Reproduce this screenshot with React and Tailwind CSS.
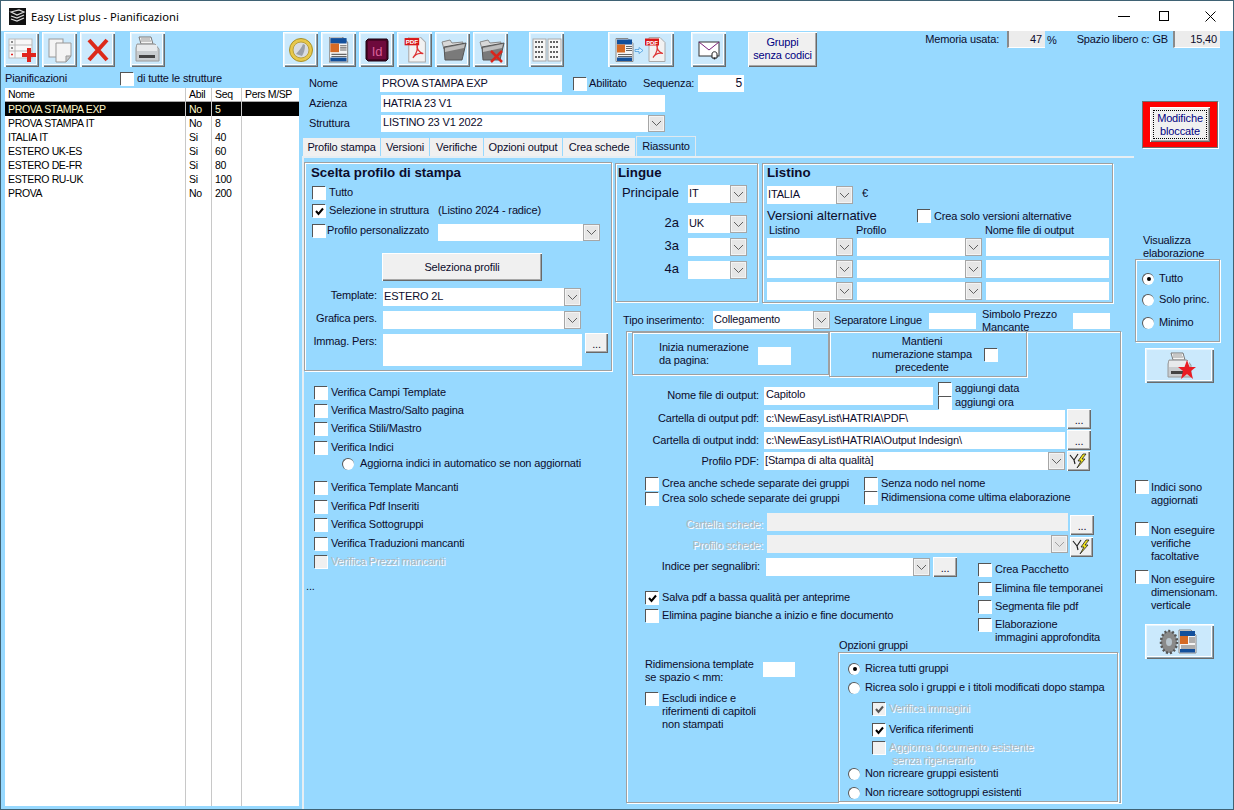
import React from "react";

const raised = "shadow-[inset_1px_1px_0_#fff,inset_-1px_-1px_0_#696969,inset_-2px_-2px_0_#a8a8a8]";
const group = "border border-[#a0a0a0] shadow-[1px_1px_0_#fff,inset_1px_1px_0_#fff]";
const disabledText = "text-[#aeb8c0] [text-shadow:1px_1px_0_#fff]";

const Check = ({ checked, disabled, className = "" }) => (
  <span
    className={`shrink-0 inline-flex w-[13px] h-[13px] items-center justify-center border-t border-l border-[#555] shadow-[1px_1px_0_#fff] ${disabled ? "bg-[#f0f0f0]" : "bg-white"} ${className}`}
  >
    {checked && (
      <svg width="11" height="11" viewBox="0 0 11 11">
        <path d="M2 5 L4.5 8 L9 2.5" fill="none" stroke={disabled ? "#555" : "#000"} strokeWidth="2" />
      </svg>
    )}
  </span>
);

const Radio = ({ checked, className = "" }) => (
  <span
    className={`shrink-0 inline-flex w-[12px] h-[12px] rounded-full bg-white items-center justify-center border-t border-l border-[#555] ${className}`}
  >
    {checked && <span className="w-[4px] h-[4px] rounded-full bg-black" />}
  </span>
);

const Input = ({ value, className = "", right, disabled }) => (
  <div
    className={`flex items-center px-[2px] overflow-hidden whitespace-nowrap ${disabled ? "bg-[#f0f0f0]" : "bg-white"} ${right ? "justify-end" : ""} ${className}`}
  >
    {value}
  </div>
);

const Arrow = ({ disabled }) => (
  <div className="w-[17px] shrink-0 self-stretch flex items-center justify-center bg-[#e6e6e6] border border-[#a6a6a6] shadow-[inset_0_0_0_1px_#f4f4f4]">
    <svg width="11" height="7" viewBox="0 0 11 7">
      <path d="M1 1 L5.5 5.5 L10 1" fill="none" stroke={disabled ? "#a0a0a0" : "#606060"} strokeWidth="1" />
    </svg>
  </div>
);

const Select = ({ value, className = "", disabled }) => (
  <div className={`flex ${disabled ? "bg-[#f0f0f0]" : "bg-white"} ${className}`}>
    <div className="flex-1 px-[1px] pb-[2px] flex items-center overflow-hidden whitespace-nowrap">{value}</div>
    <Arrow disabled={disabled} />
  </div>
);

const Dots = ({ className = "" }) => (
  <div className={`bg-[#f0f0f0] flex items-center justify-center pt-[3px] ${raised} ${className}`}>...</div>
);

const Bolt = ({ className = "" }) => (
  <div className={`bg-[#f0f0f0] flex items-center justify-center ${raised} ${className}`}>
    <svg width="20" height="16" viewBox="0 0 20 16">
      <path d="M1 2 L5 7 M9 1 L5 7 L6 11" fill="none" stroke="#222" strokeWidth="1.2" />
      <path d="M14 1 L9 8 L12 8 L8 15 L16 6 L13 6 L17 1 Z" fill="#f5e81e" stroke="#222" strokeWidth="0.8" />
    </svg>
  </div>
);

const IconBtn = ({ children, className = "w-[35px]" }) => (
  <div
    className={`h-[35px] shrink-0 bg-[#cbe9fc] flex items-center justify-center shadow-[inset_1px_1px_0_#fff,inset_2px_2px_0_#e6f6ff,inset_-1px_-1px_0_#6b6b6b,inset_-2px_-2px_0_#8fa4b0,inset_-3px_-3px_0_#fff] ${className}`}
  >
    {children}
  </div>
);

const Sheet = ({ x = 0, y = 0 }) => (
  <g transform={`translate(${x} ${y})`}>
    <path d="M0 0 H12 L17 5 V23 H0 Z" fill="#f4f4f4" stroke="#888" />
    <rect x="1" y="1" width="15" height="5" fill="#12509c" />
    <rect x="1" y="6" width="8" height="8" fill="#d56a24" />
    <path d="M10 8 H16 M10 10 H16 M10 12 H16 M2 16 H16 M2 18 H16" stroke="#666" />
    <rect x="1" y="19" width="15" height="3.5" fill="#12509c" />
  </g>
);

const PdfDoc = ({ x = 0, y = 0 }) => (
  <g transform={`translate(${x} ${y})`}>
    <path d="M4 0 H15 L20 5 V24 H4 Z" fill="#f2f2f2" stroke="#aaa" />
    <path d="M8 20 C12 16 13 10 12 7 C11 11 14 15 18 16 C14 15 10 17 8 20 Z" fill="none" stroke="#d33" strokeWidth="1.2" />
    <rect x="0" y="1" width="14" height="7" fill="#d81818" />
    <text x="7" y="7" textAnchor="middle" fontSize="6" fontWeight="700" fill="#fff" fontFamily="Liberation Sans">PDF</text>
  </g>
);

const Folder = ({ cross }) => (
  <svg width="28" height="26" viewBox="0 0 28 26">
    <path d="M3 5 L11 3 L13 6 L24 5 L23 9 L5 12 Z" fill="#d8d8d8" stroke="#888" />
    <path d="M5 10 L27 6 L23 23 L6 23 Z" fill="#7a7a7a" stroke="#555" />
    <path d="M6 11 L26 7 L25 11 L6 15 Z" fill="#bdbdbd" />
    {cross && <path d="M14 14 L25 25 M25 14 L14 25" stroke="#d9261c" strokeWidth="2.5" />}
  </svg>
);

const Printer = ({ star }) => (
  <svg width="32" height="28" viewBox="0 0 32 28">
    <path d="M7 1 H19 L21 8 H9 Z" fill="#f4f4f4" stroke="#777" />
    <path d="M9 3 H18 M9 5 H19" stroke="#999" />
    <path d="M5 8 H23 L27 13 V25 H4 V12 Z" fill="#c9cdd0" stroke="#9a9a9a" />
    <rect x="5" y="9" width="20" height="6" fill="#e8eaec" />
    <rect x="7" y="19" width="16" height="3" fill="#444" />
    {star && <path d="M23 8 L25.5 15 H32 L27 19 L29 27 L23 22 L17 27 L19 19 L14 15 H20.5 Z" fill="#e81c24" />}
  </svg>
);

const GridIcon = () => (
  <svg width="30" height="24" viewBox="0 0 30 24">
    <rect x="1" y="1" width="13" height="22" fill="#f6f6f6" stroke="#aaa" />
    <rect x="16" y="1" width="13" height="22" fill="#f6f6f6" stroke="#aaa" />
    <path d="M3 4 H12 M3 9 H12 M3 14 H12 M3 19 H12 M18 4 H27 M18 9 H27 M18 14 H27 M18 19 H27" stroke="#333" strokeWidth="1.5" strokeDasharray="2 1" />
  </svg>
);

const toolbarLeft = [
  <svg key="n" width="30" height="26" viewBox="0 0 30 26">
    <rect x="2" y="2" width="23" height="19" fill="#f8f8f8" stroke="#bbb" />
    <path d="M8 2 V21 M2 8 H25 M2 14 H25" stroke="#bbb" />
    <path d="M4 5 H6 M4 11 H6" stroke="#222" />
    <path d="M4 17.5 H6 M5 16.5 V18.5" stroke="#d22" />
    <path d="M20 11 H24 V16 H29 V20 H24 V25 H20 V20 H15 V16 H20 Z" fill="#e0241c" />
  </svg>,
  <svg key="c" width="26" height="26" viewBox="0 0 26 26">
    <rect x="2" y="2" width="14" height="18" fill="#f4f4f4" stroke="#999" />
    <path d="M9 6 H24 V19 L19 25 H9 Z" fill="#f4f4f4" stroke="#999" />
    <path d="M19 25 V19 H24 Z" fill="#ccc" stroke="#999" />
  </svg>,
  <svg key="x" width="24" height="24" viewBox="0 0 24 24">
    <path d="M3 2 L21 22 M21 2 L3 22" stroke="#dc2a1a" strokeWidth="4" />
  </svg>,
];

const rows = [
  ["PROVA STAMPA EXP", "No", "5"],
  ["PROVA STAMPA IT", "No", "8"],
  ["ITALIA IT", "Si", "40"],
  ["ESTERO UK-ES", "Si", "60"],
  ["ESTERO DE-FR", "Si", "80"],
  ["ESTERO RU-UK", "Si", "100"],
  ["PROVA", "No", "200"],
];

const columns = [
  { title: "Nome", width: "w-[181px]", cell: (r) => r[0] },
  { title: "Abil", width: "w-[26px]", cell: (r) => r[1] },
  { title: "Seq", width: "w-[30px]", cell: (r) => r[2] },
  { title: "Pers M/SP", width: "flex-1", cell: () => "" },
];

const tabs = [
  ["Profilo stampa", "w-[77px]"],
  ["Versioni", "w-[48px]"],
  ["Verifiche", "w-[53px]"],
  ["Opzioni output", "w-[78px]"],
  ["Crea schede", "w-[72px]"],
];

const verifiche = [
  ["Verifica Campi Template", "mt-[15px]"],
  ["Verifica Mastro/Salto pagina", "mt-[5px]"],
  ["Verifica Stili/Mastro", "mt-[5px]"],
  ["Verifica Indici", "mt-[6px]"],
];
const verifiche2 = [
  ["Verifica Template Mancanti", "mt-[11px]"],
  ["Verifica Pdf Inseriti", "mt-[6px]"],
  ["Verifica Sottogruppi", "mt-[5px]"],
  ["Verifica Traduzioni mancanti", "mt-[6px]"],
];

const CheckRow = ({ label, className = "", checked }) => (
  <div className={`flex items-center h-[13px] whitespace-nowrap ${className}`}>
    <Check checked={checked} />
    <span className="ml-[4px]">{label}</span>
  </div>
);

const LangRow = ({ label, value, className = "" }) => (
  <div className={`flex h-[18px] ${className}`}>
    <div className="w-[64px] pr-[1px] text-right text-[13px] leading-[16px] tracking-normal">{label}</div>
    <Select value={value} className="ml-[8px] w-[59px] h-[18px]" />
  </div>
);

const AltRow = ({ className = "" }) => (
  <div className={`flex h-[18px] ${className}`}>
    <Select className="w-[86px]" />
    <Select className="ml-[4px] w-[125px]" />
    <Input className="ml-[4px] w-[123px]" />
  </div>
);

export default function App() {
  return (
    <div className="w-[1234px] h-[810px] overflow-hidden flex flex-col bg-[#97d9ff] text-[#0c0c2c] text-[11px] tracking-[-0.15px] leading-[13px] border-x border-b border-[#3f6274] font-['Liberation_Sans',Arial,sans-serif]">
      {/* title bar */}
      <div className="h-[31px] shrink-0 bg-white border-t border-[#3f6274] flex items-center text-black">
        <svg className="ml-[8px]" width="17" height="17" viewBox="0 0 17 17">
          <rect width="17" height="17" fill="#111" />
          <path d="M2 4 L10 2 L15 4 L8 7 Z M2 8 L8 10 L15 7 M2 11 L8 13 L15 10" fill="none" stroke="#ddd" strokeWidth="1.2" />
        </svg>
        <span className="ml-[5px] text-[11.2px] tracking-normal font-['Noto_Sans',sans-serif]">Easy List plus - Pianificazioni</span>
        <div className="ml-auto flex items-center mr-[17px]">
          <div className="w-[12px] h-[1px] bg-black mr-[29px]" />
          <div className="w-[10px] h-[10px] border border-black mr-[36px]" />
          <svg width="11" height="11" viewBox="0 0 11 11">
            <path d="M0.5 0.5 L10.5 10.5 M10.5 0.5 L0.5 10.5" stroke="#000" />
          </svg>
        </div>
      </div>

      {/* toolbar */}
      <div className="h-[37px] shrink-0 flex items-start pl-[3px] pt-[1px]">
        <div className="flex gap-[3px]">
          {toolbarLeft.map((icon, i) => (
            <IconBtn key={i}>{icon}</IconBtn>
          ))}
        </div>
        <IconBtn className="w-[35px] ml-[15px]"><Printer /></IconBtn>
        <div className="flex gap-[3px] ml-[118px]">
          <IconBtn>
            <svg width="26" height="26" viewBox="0 0 26 26">
              <circle cx="13" cy="13" r="11.5" fill="#e8c84a" stroke="#a8902a" />
              <circle cx="13" cy="13" r="8" fill="#d8dce2" stroke="#b8a040" />
              <path d="M8 17 C11 14 14 10 15 7 L17 8 C17 12 16 16 14 19 Z" fill="#9aa0aa" />
            </svg>
          </IconBtn>
          <IconBtn>
            <svg width="20" height="26" viewBox="0 0 18 24"><Sheet /></svg>
          </IconBtn>
          <IconBtn>
            <svg width="24" height="24" viewBox="0 0 24 24">
              <path d="M1 3 L3 1 H22 L23 3 V21 L21 23 H3 L1 21 Z" fill="#4a0525" stroke="#1a0210" />
              <rect x="3" y="3" width="18" height="18" rx="1" fill="#6e0a3c" />
              <text x="12" y="18" textAnchor="middle" fontSize="13" fill="#d9609a" fontFamily="Liberation Sans">Id</text>
            </svg>
          </IconBtn>
          <IconBtn>
            <svg width="22" height="26" viewBox="0 0 20 25"><PdfDoc /></svg>
          </IconBtn>
          <IconBtn><Folder /></IconBtn>
          <IconBtn><Folder cross /></IconBtn>
        </div>
        <IconBtn className="w-[35px] ml-[21px]"><GridIcon /></IconBtn>
        <IconBtn className="w-[66px] ml-[44px]">
          <svg width="52" height="26" viewBox="0 0 52 25">
            <Sheet x="1" y="1" />
            <path d="M20 12 H24 V10 L28 13 L24 16 V14 H20 Z" fill="#d8f2ff" stroke="#3a90d8" strokeWidth="0.7" />
            <PdfDoc x="30" />
          </svg>
        </IconBtn>
        <IconBtn className="w-[35px] ml-[17px]">
          <svg width="22" height="20" viewBox="0 0 22 20">
            <rect x="1" y="2" width="20" height="14" fill="#fff" stroke="#333" />
            <path d="M1 2 L11 10 L21 2" fill="none" stroke="#7a1f7a" />
            <path d="M14 18 V14 C14 11 19 11 19 14 V18 Z" fill="#fff" stroke="#222" />
            <circle cx="16.5" cy="18.5" r="1" fill="#222" />
          </svg>
        </IconBtn>
        <div className={`w-[69px] h-[35px] ml-[22px] bg-[#f0f0f0] text-[#000080] text-center flex items-center justify-center pb-[1px] ${raised}`}>
          Gruppi<br />senza codici
        </div>
        <div className="ml-auto mr-[13px] -mt-[1px] flex items-start">
          <span className="mt-[2px]">Memoria usata:</span>
          <div className="ml-[8px] w-[38px] h-[17px] bg-[#ececec] border-l-2 border-[#8a8a8a] border-b border-b-white flex items-center justify-end pr-[3px]">47</div>
          <span className="ml-[2px] mt-[3px] mr-[20px]">%</span>
          <span className="mt-[2px]">Spazio libero c: GB</span>
          <div className="ml-[5px] w-[47px] h-[17px] bg-[#ececec] border-l-2 border-[#8a8a8a] border-b border-b-white flex items-center justify-end pr-[3px]">15,40</div>
        </div>
      </div>

      <div className="flex-1 flex min-h-0">
        {/* plan list */}
        <div className="w-[301px] shrink-0 pl-[4px] pr-[3px] flex flex-col">
          <div className="flex items-center h-[13px] mt-[4px]">
            <span className="w-[115px]">Pianificazioni</span>
            <Check />
            <span className="ml-[4px]">di tutte le strutture</span>
          </div>
          <div className="mt-[3px] h-[718px] bg-white flex text-black text-[10.5px] tracking-[-0.35px]">
            {columns.map((col, c) => (
              <div key={col.title} className={`${col.width} ${c < 3 ? "border-r border-[#c8c8c8]" : ""} flex flex-col`}>
                <div className="h-[14px] pl-[3px] flex items-center whitespace-nowrap border-b border-[#a8a8a8] shrink-0">{col.title}</div>
                {rows.map((r, i) => (
                  <div
                    key={r[0]}
                    className={`h-[14px] pl-[3px] flex items-center whitespace-nowrap shrink-0 ${i === 0 ? "bg-black text-[#fff7c8]" : ""}`}
                  >
                    {col.cell(r)}
                  </div>
                ))}
              </div>
            ))}
          </div>
        </div>

        <div className="w-[832px] shrink-0 flex flex-col">
          {/* header fields */}
          <div className="flex items-center h-[17px] mt-[7px]">
            <span className="w-[78px] pl-[7px]">Nome</span>
            <Input value="PROVA STAMPA EXP" className="w-[182px] h-[17px]" />
            <Check className="ml-[11px]" />
            <span className="ml-[3px] w-[54px]">Abilitato</span>
            <span className="w-[50px]">Sequenza:</span>
            <Input value="5" right className="ml-[5px] w-[46px] h-[17px] text-[12px]" />
          </div>
          <div className="flex items-center h-[17px] mt-[3px]">
            <span className="w-[79px] pl-[7px]">Azienza</span>
            <Input value="HATRIA 23 V1" className="w-[284px] h-[17px]" />
          </div>
          <div className="flex items-center h-[17px] mt-[3px]">
            <span className="w-[79px] pl-[7px]">Struttura</span>
            <Select value="LISTINO 23 V1 2022" className="w-[284px] h-[17px] pl-[1px]" />
          </div>

          {/* tabs */}
          <div className="flex mt-[4px] h-[20px] pl-[1px] gap-[1px] items-end">
            {tabs.map(([t, w]) => (
              <div key={t} className={`${w} h-[18px] bg-[#f0f0f0] flex items-center justify-center whitespace-nowrap`}>{t}</div>
            ))}
            <div className="w-[60px] h-[20px] border-t border-x border-[#dfe9ef] flex items-center justify-center">Riassunto</div>
          </div>
          <div className="h-[2px] bg-[#e6eef3] shrink-0" />

          <div className="flex-1 flex border-l-2 border-[#e6eef3] min-h-0">
            {/* left column */}
            <div className="w-[311px] shrink-0 flex flex-col">
              <div className={`w-[308px] h-[209px] mt-[4px] ${group}`}>
                <div className="pl-[6px] h-[18px] flex items-center font-bold text-[13.3px] tracking-normal">Scelta profilo di stampa</div>
                <CheckRow label="Tutto" className="mt-[5px] ml-[7px]" />
                <div className="flex items-center h-[13px] mt-[5px] ml-[7px] whitespace-nowrap">
                  <Check checked />
                  <span className="ml-[4px] w-[109px]">Selezione in struttura</span>
                  <span>(Listino 2024 - radice)</span>
                </div>
                <div className="flex h-[17px] mt-[7px] ml-[7px] whitespace-nowrap">
                  <Check />
                  <span className="ml-[2px] w-[111px]">Profilo personalizzato</span>
                  <Select className="w-[162px] h-[17px]" />
                </div>
                <div className={`ml-[77px] mt-[12px] w-[160px] h-[28px] bg-[#f0f0f0] flex items-center justify-center ${raised}`}>Seleziona profili</div>
                <div className="flex h-[18px] mt-[7px]">
                  <div className="w-[72px] text-right pt-[1px]">Template:</div>
                  <Select value="ESTERO 2L" className="ml-[6px] w-[198px]" />
                </div>
                <div className="flex h-[18px] mt-[5px]">
                  <div className="w-[72px] text-right pt-[1px]">Grafica pers.</div>
                  <Select className="ml-[6px] w-[198px]" />
                </div>
                <div className="flex mt-[4px]">
                  <div className="w-[72px] text-right pt-[2px]">Immag. Pers:</div>
                  <div className="ml-[6px] mt-[1px] w-[199px] h-[32px] bg-white" />
                  <Dots className="ml-[3px] w-[23px] h-[20px]" />
                </div>
              </div>

              <div className="pl-[10px]">
                {verifiche.map(([t, m]) => (
                  <CheckRow key={t} label={t} className={m} />
                ))}
                <div className="flex items-center h-[13px] mt-[3px] ml-[28px] whitespace-nowrap">
                  <Radio />
                  <span className="ml-[6px]">Aggiorna indici in automatico se non aggiornati</span>
                </div>
                {verifiche2.map(([t, m]) => (
                  <CheckRow key={t} label={t} className={m} />
                ))}
                <div className="flex items-center h-[13px] mt-[5px] whitespace-nowrap">
                  <Check disabled />
                  <span className={`ml-[4px] ${disabledText}`}>Verifica Prezzi mancanti</span>
                </div>
              </div>
              <div className="pl-[2px] mt-[12px]">...</div>
            </div>

            {/* middle column */}
            <div className="flex-1 flex flex-col min-w-0">
              <div className="flex mt-[5px]">
                <div className={`w-[143px] h-[139px] ${group}`}>
                  <div className="pl-[2px] h-[17px] flex items-center font-bold text-[13.3px] tracking-normal">Lingue</div>
                  <LangRow label="Principale" value="IT" className="mt-[4px]" />
                  <LangRow label="2a" value="UK" className="mt-[12px]" />
                  <LangRow label="3a" value="" className="mt-[5px]" />
                  <LangRow label="4a" value="" className="mt-[5px]" />
                </div>
                <div className={`ml-[4px] w-[351px] h-[140px] pl-[4px] ${group}`}>
                  <div className="h-[16px] flex items-center font-bold text-[13.3px] tracking-normal">Listino</div>
                  <div className="flex h-[18px] mt-[6px]">
                    <Select value="ITALIA" className="w-[86px]" />
                    <span className="ml-[9px] pt-[1px]">€</span>
                  </div>
                  <div className="flex items-center h-[16px] mt-[3px] whitespace-nowrap">
                    <span className="text-[13px] w-[150px] tracking-normal">Versioni alternative</span>
                    <Check />
                    <span className="ml-[4px] mt-[2px]">Crea solo versioni alternative</span>
                  </div>
                  <div className="flex h-[13px] mt-[1px] whitespace-nowrap">
                    <span className="ml-[2px] w-[87px]">Listino</span>
                    <span className="w-[129px]">Profilo</span>
                    <span>Nome file di output</span>
                  </div>
                  <AltRow className="mt-[1px]" />
                  <AltRow className="mt-[4px]" />
                  <AltRow className="mt-[4px]" />
                </div>
              </div>

              <div className="flex mt-[8px] h-[20px] whitespace-nowrap">
                <span className="ml-[8px] w-[90px] pt-[3px]">Tipo inserimento:</span>
                <Select value="Collegamento" className="w-[117px] h-[18px]" />
                <span className="ml-[4px] w-[95px] pt-[3px]">Separatore Lingue</span>
                <Input className="w-[47px] h-[16px] mt-[2px]" />
                <span className="ml-[6px] w-[91px] -mt-[3px] leading-[13px]">Simbolo Prezzo<br />Mancante</span>
                <Input className="w-[37px] h-[16px] mt-[2px]" />
              </div>

              {/* output box */}
              <div className={`ml-[11px] w-[495px] h-[472px] ${group}`}>
                <div className="flex ml-[5px]">
                  <div className={`w-[197px] h-[43px] flex items-center ${group}`}>
                    <span className="ml-[26px] w-[99px]">Inizia numerazione<br />da pagina:</span>
                    <Input className="w-[33px] h-[18px] mt-[4px]" />
                  </div>
                  <div className={`w-[198px] h-[46px] flex items-center -mt-[1px] ${group}`}>
                    <span className="ml-[30px] w-[124px] text-center whitespace-nowrap">Mantieni<br />numerazione stampa<br />precedente</span>
                    <Check />
                  </div>
                </div>

                <div className="flex mt-[6px] h-[26px]">
                  <div className="w-[132px] text-right pt-[6px]">Nome file di output:</div>
                  <Input value="Capitolo" className="ml-[5px] w-[169px] h-[18px] mt-[4px] pb-[3px]" />
                  <div className="ml-[5px] -mt-[1px]">
                    <CheckRow label="aggiungi data" />
                    <CheckRow label="aggiungi ora" className="mt-[1px]" />
                  </div>
                </div>
                <div className="flex h-[21px]">
                  <div className="w-[132px] text-right pt-[3px]">Cartella di output pdf:</div>
                  <Input value="c:\NewEasyList\HATRIA\PDF\" className="ml-[5px] w-[301px] h-[17px] mt-[1px]" />
                  <Dots className="ml-[2px] w-[24px] h-[20px]" />
                </div>
                <div className="flex h-[21px]">
                  <div className="w-[132px] text-right pt-[4px]">Cartella di output indd:</div>
                  <Input value="c:\NewEasyList\HATRIA\Output Indesign\" className="ml-[5px] w-[301px] h-[17px] mt-[2px]" />
                  <Dots className="ml-[2px] w-[24px] h-[20px]" />
                </div>
                <div className="flex h-[20px]">
                  <div className="w-[132px] text-right pt-[4px]">Profilo PDF:</div>
                  <Select value="[Stampa di alta qualità]" className="ml-[5px] w-[301px] h-[18px] mt-[1px]" />
                  <Bolt className="ml-[2px] w-[23px] h-[20px]" />
                </div>

                <div className="flex mt-[6px]">
                  <div className="ml-[18px] w-[219px]">
                    <CheckRow label="Crea anche schede separate dei gruppi" />
                    <CheckRow label="Crea solo schede separate dei gruppi" className="mt-[2px]" />
                  </div>
                  <div>
                    <CheckRow label="Senza nodo nel nome" />
                    <CheckRow label="Ridimensiona come ultima elaborazione" className="mt-[1px]" />
                  </div>
                </div>

                <div className="flex mt-[8px] h-[20px]">
                  <div className={`w-[136px] text-right pt-[5px] ${disabledText}`}>Cartella schede:</div>
                  <Input disabled className="ml-[4px] w-[301px] h-[18px]" />
                  <Dots className="ml-[2px] w-[24px] h-[20px] mt-[2px]" />
                </div>
                <div className="flex mt-[2px] h-[21px]">
                  <div className={`w-[136px] text-right pt-[4px] ${disabledText}`}>Profilo schede:</div>
                  <Select disabled className="ml-[4px] w-[301px] h-[18px]" />
                  <Bolt className="ml-[2px] w-[23px] h-[20px] mt-[2px]" />
                </div>

                <div className="flex mt-[1px] h-[20px]">
                  <div className="w-[133px] text-right pt-[3px]">Indice per segnalibri:</div>
                  <Select className="ml-[6px] w-[164px] h-[18px] mt-[1px]" />
                  <Dots className="ml-[3px] w-[24px] h-[20px]" />
                  <div className="ml-[21px] mt-[6px]">
                    <CheckRow label="Crea Pacchetto" />
                  </div>
                </div>

                <div className="flex mt-[2px]">
                  <div className="ml-[18px] w-[333px] pt-[12px]">
                    <CheckRow label="Salva pdf a bassa qualità per anteprime" checked />
                    <CheckRow label="Elimina pagine bianche a inizio e fine documento" className="mt-[5px]" />
                  </div>
                  <div className="pt-[3px]">
                    <CheckRow label="Elimina file temporanei" />
                    <CheckRow label="Segmenta file pdf" className="mt-[5px]" />
                    <div className="flex mt-[5px] whitespace-nowrap">
                      <Check />
                      <span className="ml-[4px]">Elaborazione<br />immagini approfondita</span>
                    </div>
                  </div>
                </div>

                <div className="flex -mt-[1px]">
                  <div className="ml-[18px] w-[193px] pt-[15px]">
                    <div className="flex">
                      <span className="w-[118px]">Ridimensiona template<br />se spazio &lt; mm:</span>
                      <Input className="w-[32px] h-[15px] mt-[4px]" />
                    </div>
                    <div className="flex mt-[8px]">
                      <Check />
                      <span className="ml-[4px]">Escludi indice e<br />riferimenti di capitoli<br />non stampati</span>
                    </div>
                  </div>
                  <div className="-mt-[4px]">
                    <div className="ml-[1px] h-[13px]">Opzioni gruppi</div>
                    <div className={`w-[280px] h-[150px] pl-[9px] ${group}`}>
                      <div className="flex items-center h-[13px] mt-[9px]">
                        <Radio checked />
                        <span className="ml-[5px]">Ricrea tutti gruppi</span>
                      </div>
                      <div className="flex items-center h-[13px] mt-[6px] whitespace-nowrap">
                        <Radio />
                        <span className="ml-[5px]">Ricrea solo i gruppi e i titoli modificati dopo stampa</span>
                      </div>
                      <div className="flex items-center h-[13px] mt-[8px] ml-[24px]">
                        <Check checked disabled />
                        <span className={`ml-[4px] ${disabledText}`}>Verifica immagini</span>
                      </div>
                      <div className="flex items-center h-[13px] mt-[8px] ml-[24px]">
                        <Check checked />
                        <span className="ml-[4px]">Verifica riferimenti</span>
                      </div>
                      <div className="flex mt-[5px] ml-[24px] whitespace-nowrap">
                        <Check disabled />
                        <span className={`ml-[4px] ${disabledText}`}>Aggiorna documento esistente<br />&nbsp;senza rigenerarlo</span>
                      </div>
                      <div className="flex items-center h-[13px] mt-[0px]">
                        <Radio />
                        <span className="ml-[5px]">Non ricreare gruppi esistenti</span>
                      </div>
                      <div className="flex items-center h-[13px] mt-[6px]">
                        <Radio />
                        <span className="ml-[5px]">Non ricreare sottogruppi esistenti</span>
                      </div>
                    </div>
                  </div>
                </div>
              </div>
            </div>
          </div>
        </div>

        {/* right column */}
        <div className="flex-1 flex flex-col pl-[1px]">
          <div className="ml-[7px] mt-[33px] w-[76px] h-[47px] bg-[#ff0000] border border-[#6f6f6f] shadow-[1px_1px_0_#fff] flex items-center justify-center">
            <div className={`w-[60px] h-[35px] bg-[#f0f0f0] flex items-center justify-center ${raised}`}>
              <div className="border border-dotted border-black w-[54px] h-[29px] flex items-center justify-center text-center text-[#000080] leading-[13px]">
                Modifiche<br />bloccate
              </div>
            </div>
          </div>
          <div className="ml-[8px] mt-[86px] leading-[13px]">Visualizza<br />elaborazione</div>
          <div className={`-mt-[1px] w-[85px] h-[83px] pl-[6px] ${group}`}>
            <div className="flex items-center h-[13px] mt-[12px]">
              <Radio checked />
              <span className="ml-[5px]">Tutto</span>
            </div>
            <div className="flex items-center h-[13px] mt-[8px]">
              <Radio />
              <span className="ml-[5px]">Solo princ.</span>
            </div>
            <div className="flex items-center h-[13px] mt-[10px]">
              <Radio />
              <span className="ml-[5px]">Minimo</span>
            </div>
          </div>
          <IconBtn className="w-[69px] ml-[10px] mt-[6px]"><Printer star /></IconBtn>
          <div className="flex mt-[97px]">
            <Check />
            <span className="ml-[3px] mt-[1px]">Indici sono<br />aggiornati</span>
          </div>
          <div className="flex mt-[15px]">
            <Check />
            <span className="ml-[3px] mt-[2px]">Non eseguire<br />verifiche<br />facoltative</span>
          </div>
          <div className="flex mt-[7px]">
            <Check />
            <span className="ml-[3px] mt-[3px]">Non eseguire<br />dimensionam.<br />verticale</span>
          </div>
          <IconBtn className="w-[69px] ml-[10px] mt-[12px]">
            <svg width="44" height="26" viewBox="0 0 44 26">
              <ellipse cx="11" cy="13" rx="8" ry="11" fill="#8a8a8a" stroke="#555" strokeWidth="2.5" strokeDasharray="2 2" />
              <ellipse cx="11" cy="13" rx="3" ry="4" fill="#b8c4cc" />
              <Sheet x="21" y="1" />
            </svg>
          </IconBtn>
        </div>
      </div>
    </div>
  );
}
